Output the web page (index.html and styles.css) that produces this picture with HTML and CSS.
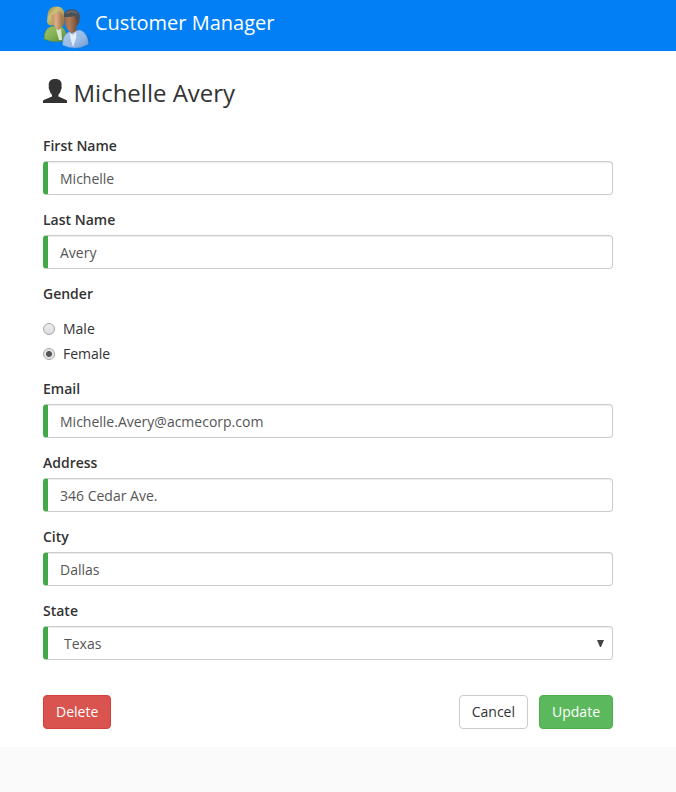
FILE: index.html
```html
<!DOCTYPE html>
<html lang="en">
<head>
<meta charset="utf-8">
<title>Customer Manager</title>
<link rel="stylesheet" href="styles.css">
</head>
<body>
<header class="navbar">
  <svg class="logo" viewBox="0 0 48 48" aria-hidden="true">
    <defs>
      <linearGradient id="green" x1="0" y1="0" x2="1" y2="1"><stop offset="0" stop-color="#9fc46c"/><stop offset=".5" stop-color="#83b052"/><stop offset="1" stop-color="#4f8a35"/></linearGradient>
      <linearGradient id="blue" x1="0" y1="0" x2="1" y2="1"><stop offset="0" stop-color="#a9c8ec"/><stop offset=".6" stop-color="#96bae6"/><stop offset="1" stop-color="#6c98cf"/></linearGradient>
      <linearGradient id="hair" x1="0" y1="0" x2="1" y2="1"><stop offset="0" stop-color="#8f7f38"/><stop offset=".35" stop-color="#cdc07a"/><stop offset="1" stop-color="#8a7228"/></linearGradient>
      <linearGradient id="skin"><stop offset="0" stop-color="#bd9068"/><stop offset=".4" stop-color="#dcae86"/><stop offset="1" stop-color="#9c6d48"/></linearGradient>
      <linearGradient id="tan"><stop offset="0" stop-color="#94664a"/><stop offset=".35" stop-color="#b27f5c"/><stop offset="1" stop-color="#6b432f"/></linearGradient>
      <radialGradient id="shade"><stop offset="0" stop-color="#003b80" stop-opacity=".8"/><stop offset="1" stop-color="#003b80" stop-opacity="0"/></radialGradient>
    </defs>
    <ellipse cx="35" cy="38" rx="14" ry="9" fill="url(#shade)"/>
    <path d="M1 37Q1 27 8 24.500L18 24Q24 28 24 38Q12 42 1 37Z" fill="url(#green)" stroke="#5b8d35" stroke-width=".5"/>
    <path d="M13 27l2.500 1 2.500-2 1 12h-3Z" fill="#dce5cf"/>
    <path d="M4 20Q4.500 16 4.500 13Q5 4.500 13.500 4.500Q21.500 4.500 21.500 13L20.500 24L9 23.500Q5 23.500 4 20Z" fill="url(#hair)"/>
    <path d="M8.500 13Q13 12.500 15.500 9.500Q20 11 20 17Q19.500 27 15.500 28Q12.500 26.500 10.500 23Q8.500 18 8.500 13Z" fill="url(#skin)"/>
    <path d="M19.700 43Q19.500 33 26 30L37 28Q45 31 45.300 42Q33 49.500 19.700 43Z" fill="url(#blue)" stroke="#6d9bd1" stroke-width=".5"/>
    <path d="M26.500 31l3.500 2 3-3 .5 5-3.500 10Q27.500 38 26.500 31Z" fill="#e3ecf7"/>
    <path d="M20.800 15Q20.800 7.300 28.500 7.300Q36.500 7.500 37 15Q37 20 34.500 24L31 16Z" fill="#4d5057"/>
    <path d="M21 15Q27 15.500 32 14L33 18Q35.500 16.500 35.500 19Q35 22 33.500 23L33.500 28Q31 32 28 31Q21 26 21 15Z" fill="url(#tan)"/>
    <path d="M23.500 11Q29 7.500 34 11.500" fill="none" stroke="#686c72" stroke-width="1.500"/>
  </svg>
  <span class="brand">Customer Manager</span>
</header>
<main class="container">
  <h1 class="title">
    <svg class="person" viewBox="0 0 24 24" aria-hidden="true"><path d="M0 24V21.500C3 19.700 7 18.500 9 17.500V15.700C7.400 14.300 6.800 12.500 6.500 11C5.800 10.200 5.400 8.500 5.900 7.500C5 2.500 7.500 0 12.200 0C17 0 19.300 2.500 18.500 7.500C19 8.500 18.600 10.200 17.900 11C17.600 12.500 17 14.300 15.400 15.700V17.500C17.400 18.500 21 19.700 24 21.500V24Z" fill="#333"/></svg>
    <span>Michelle Avery</span>
  </h1>
  <form>
    <div class="group"><label class="label" for="first">First Name</label><input class="control" id="first" value="Michelle"></div>
    <div class="group"><label class="label" for="last">Last Name</label><input class="control" id="last" value="Avery"></div>
    <div class="group">
      <span class="label">Gender</span>
      <div class="radios">
        <label class="radio"><input type="radio" name="gender">Male</label>
        <label class="radio"><input type="radio" name="gender" checked>Female</label>
      </div>
    </div>
    <div class="group"><label class="label" for="email">Email</label><input class="control" id="email" value="Michelle.Avery@acmecorp.com"></div>
    <div class="group"><label class="label" for="address">Address</label><input class="control" id="address" value="346 Cedar Ave."></div>
    <div class="group"><label class="label" for="city">City</label><input class="control" id="city" value="Dallas"></div>
    <div class="group"><label class="label" for="state">State</label>
      <div class="select-wrap">
        <select class="control select" id="state"><option>Texas</option></select>
        <svg class="arrow" viewBox="0 0 7 7" aria-hidden="true"><path d="M0 0H7L4 7H3Z" fill="#444"/></svg>
      </div>
    </div>
    <div class="actions">
      <button type="button" class="btn danger">Delete</button>
      <div class="right">
        <button type="button" class="btn">Cancel</button>
        <button type="button" class="btn success">Update</button>
      </div>
    </div>
  </form>
</main>
</body>
</html>
```
FILE: styles.css
```css
* { box-sizing: border-box; }
html { background: #fafafa; }
body {
  margin: 0;
  height: 747px;
  background: #fff;
  color: #333;
  font: 400 14px/20px "Open Sans", sans-serif;
}
.navbar {
  display: flex;
  height: 51px;
  padding-left: 43px;
  background: #027ff4;
  color: #fff;
}
.logo { width: 48px; height: 48px; margin-top: 2px; }
.brand {
  margin-left: 4px;
  font-size: 20px;
  font-weight: 400;
  line-height: 45px;
}
.container { width: 570px; margin-left: 43px; }
.title {
  display: flex;
  align-items: flex-start;
  gap: 6.500px;
  margin: 0;
  height: 85px;
  padding-top: 28px;
  font-size: 24px;
  font-weight: 400;
  line-height: 28px;
}
.person { width: 24px; height: 24px; }
.group { margin-bottom: 15px; }
.label {
  display: block;
  margin-bottom: 5px;
  font-weight: 600;
}
.control {
  display: block;
  width: 100%;
  height: 34px;
  padding: 6px 12px;
  border: 1px solid #ccc;
  border-left: 5px solid #42a948;
  border-radius: 4px;
  background: #fff;
  box-shadow: inset 0 1px 1px rgba(0, 0, 0, .075);
  color: #555;
  font: inherit;
}
.select-wrap { position: relative; }
.select { padding: 7px 12px 5px 16px; appearance: none; }
.arrow {
  position: absolute;
  top: 14px;
  right: 9px;
  width: 7px;
  height: 7px;
}
.radios { padding-top: 10px; }
.radio {
  display: flex;
  align-items: center;
  gap: 8px;
  margin-bottom: 5px;
}
.radios .radio:last-child { margin-bottom: 0; }
.radio input {
  appearance: none;
  width: 12px;
  height: 12px;
  margin: 0;
  border: 1px solid #a6a6a6;
  border-radius: 50%;
  background: linear-gradient(#eee, #dcdcdc);
}
.radio input:checked {
  background: radial-gradient(circle, #555 2.500px, #e6e6e6 3.500px);
}
.actions {
  display: flex;
  justify-content: space-between;
  margin-top: 35px;
}
.right { display: flex; gap: 11px; }
.btn {
  height: 34px;
  padding: 6px 12px;
  border: 1px solid #ccc;
  border-radius: 4px;
  background: #fff;
  color: #333;
  font: inherit;
}
.btn.danger { background: #d9534f; border-color: #d43f3a; color: #fff; }
.btn.success { background: #5cb85c; border-color: #4cae4c; color: #fff; }
```
